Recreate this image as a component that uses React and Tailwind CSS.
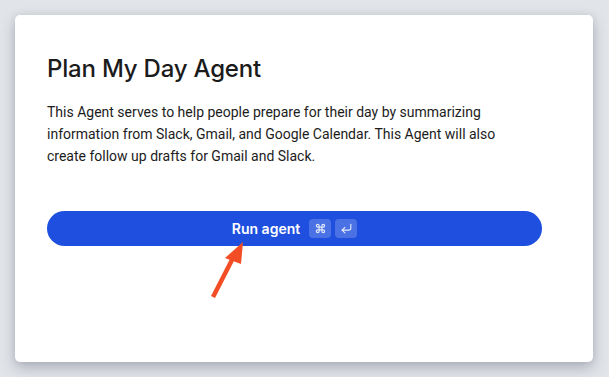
import React from "react";
import { Command, CornerDownLeft } from "lucide-react";

export default function App() {
  return (
    <div className="w-[609px] h-[377px] bg-[#e1e4e8] pt-[15px] pl-[15px] pr-[16px] overflow-hidden" style={{ fontFamily: "Inter, 'Noto Sans', sans-serif" }}>
      <div className="relative h-[347px] bg-white rounded-[5px] shadow-[0_6px_14px_rgba(80,90,110,0.35),0_0_6px_rgba(80,90,110,0.12)] pt-[38px] pl-[32px] pr-[51px]">
        <h1 className="text-[24px] leading-[32px] font-medium text-[#1b1b1b] tracking-[-0.2px]">Plan My Day Agent</h1>
        <p className="mt-[16px] w-[465px] text-[14px] leading-[22px] text-[#1c1c1c]" style={{ fontFamily: "Roboto, 'Liberation Sans', sans-serif" }}>
          This Agent serves to help people prepare for their day by summarizing information from Slack, Gmail, and Google Calendar. This Agent will also create follow up drafts for Gmail and Slack.
        </p>
        <button className="mt-[44px] w-full h-[35px] rounded-full bg-[#1e4fdf] flex items-center justify-center gap-[9px] text-white">
          <span className="text-[14px] font-semibold">Run agent</span>
          <span className="flex gap-[4px]">
            <span className="w-[22px] h-[19px] rounded-[4px] bg-white/20 flex items-center justify-center">
              <Command size={11} strokeWidth={2.5} className="text-white/85" />
            </span>
            <span className="w-[22px] h-[19px] rounded-[4px] bg-white/20 flex items-center justify-center">
              <CornerDownLeft size={13} strokeWidth={2} className="text-white/85" />
            </span>
          </span>
        </button>
        <svg className="absolute left-[185px] top-[221px]" width="50" height="66" viewBox="200 236 50 66">
          <line x1="213" y1="297" x2="234" y2="256" stroke="#f24d24" strokeWidth="4.5" strokeLinecap="butt" />
          <polygon points="243,242 225,258 241,264" fill="#f24d24" />
        </svg>
      </div>
    </div>
  );
}
